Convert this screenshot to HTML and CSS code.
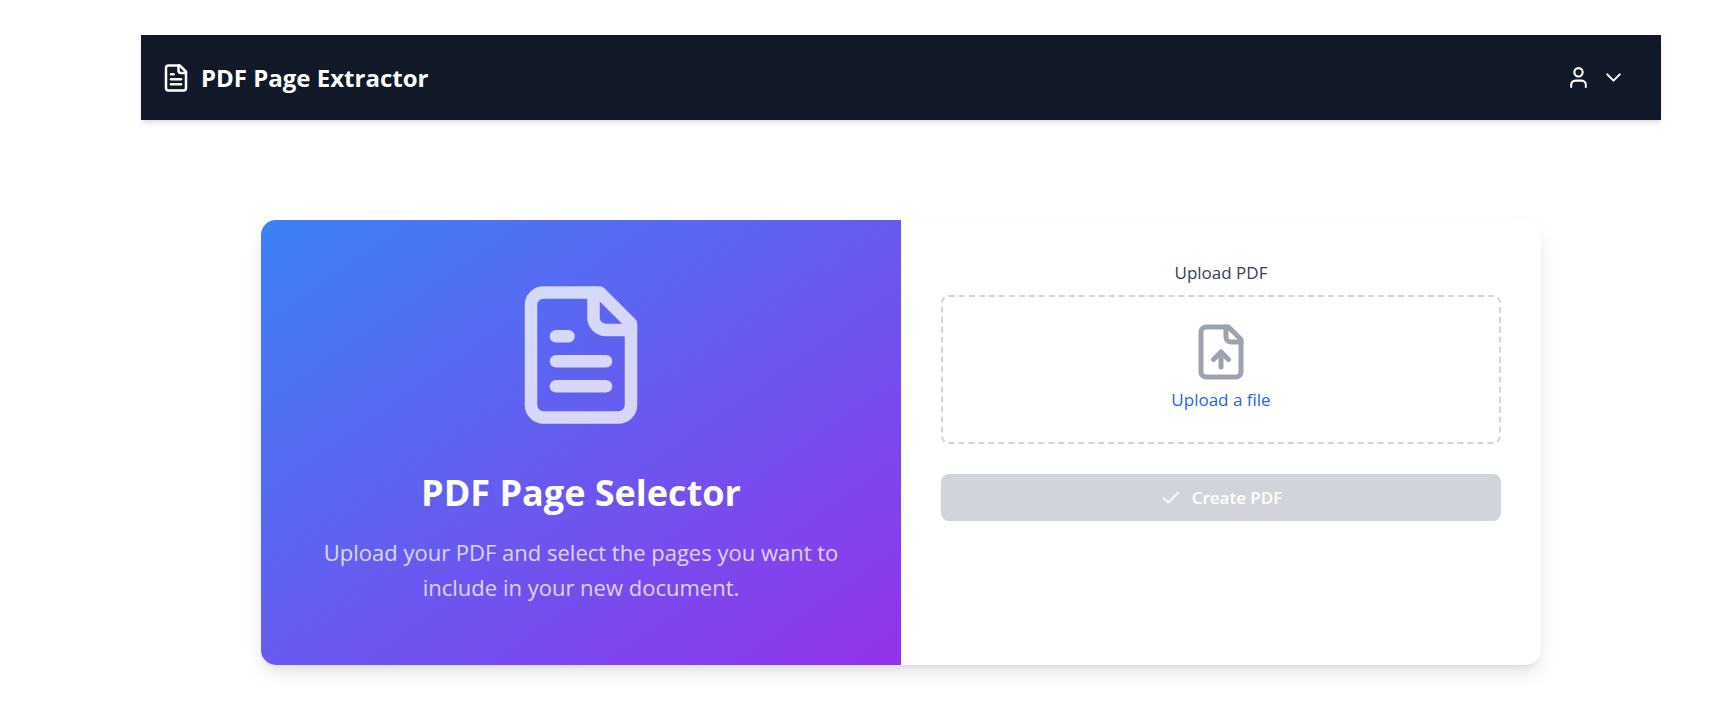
FILE: index.html
```html
<!DOCTYPE html>
<html lang="en">
<head>
<meta charset="utf-8">
<meta name="viewport" content="width=device-width, initial-scale=1">
<title>PDF Page Extractor</title>
<link rel="stylesheet" href="styles.css">
</head>
<body>
<div class="page">
  <header class="header">
    <h1 class="brand">
      <svg class="icon icon-brand" viewBox="0 0 24 24" aria-hidden="true"><path d="M15 2H6a2 2 0 0 0-2 2v16a2 2 0 0 0 2 2h12a2 2 0 0 0 2-2V7Z"/><path d="M14 2v4a2 2 0 0 0 2 2h4"/><path d="M10 9H8"/><path d="M16 13H8"/><path d="M16 17H8"/></svg>
      PDF Page Extractor
    </h1>
    <button class="account" type="button" aria-label="Account menu">
      <svg class="icon icon-small" viewBox="0 0 24 24" aria-hidden="true"><path d="M19 21v-2a4 4 0 0 0-4-4H9a4 4 0 0 0-4 4v2"/><circle cx="12" cy="7" r="4"/></svg>
      <svg class="icon icon-small" viewBox="0 0 24 24" aria-hidden="true"><path d="m6 9 6 6 6-6"/></svg>
    </button>
  </header>
  <main class="card">
    <section class="intro">
      <svg class="icon icon-hero" viewBox="0 0 24 24" aria-hidden="true"><path d="M15 2H6a2 2 0 0 0-2 2v16a2 2 0 0 0 2 2h12a2 2 0 0 0 2-2V7Z"/><path d="M14 2v4a2 2 0 0 0 2 2h4"/><path d="M10 9H8"/><path d="M16 13H8"/><path d="M16 17H8"/></svg>
      <h2 class="intro-title">PDF Page Selector</h2>
      <p class="intro-text">Upload your PDF and select the pages you want to include in your new document.</p>
    </section>
    <form class="form">
      <label class="label" for="pdf">Upload PDF</label>
      <div class="dropzone">
        <svg class="icon icon-upload" viewBox="0 0 24 24" aria-hidden="true"><path d="M15 2H6a2 2 0 0 0-2 2v16a2 2 0 0 0 2 2h12a2 2 0 0 0 2-2V7Z"/><path d="M14 2v4a2 2 0 0 0 2 2h4"/><path d="M12 12v6"/><path d="m15 15-3-3-3 3"/></svg>
        <label class="upload-link" for="pdf">Upload a file</label>
        <input class="file-input" id="pdf" type="file" accept="application/pdf">
      </div>
      <button class="submit" type="submit" disabled>
        <svg class="icon icon-check" viewBox="0 0 24 24" aria-hidden="true"><path d="M20 6 9 17l-5-5"/></svg>
        Create PDF
      </button>
    </form>
  </main>
</div>
</body>
</html>
```
FILE: styles.css
```css
* {
  box-sizing: border-box;
}

body {
  margin: 0;
  background: #fff;
  font-family: "Open Sans", "Noto Sans", sans-serif;
  font-size: 17px;
  line-height: 25px;
}

.page {
  padding: 35px 70px 35px 141px;
}

.icon {
  display: block;
  flex: none;
  fill: none;
  stroke: currentColor;
  stroke-width: 2;
  stroke-linecap: round;
  stroke-linejoin: round;
}

.header {
  display: flex;
  align-items: center;
  justify-content: space-between;
  padding: 20px;
  background: #111827;
  color: #fff;
  box-shadow: 0 4px 6px -1px rgba(0, 0, 0, 0.1), 0 2px 4px -2px rgba(0, 0, 0, 0.1);
}

.brand {
  display: flex;
  align-items: center;
  gap: 10px;
  margin: 0;
  font-size: 24px;
  font-weight: 700;
  line-height: 45px;
}

.icon-brand {
  width: 30px;
  height: 30px;
}

.account {
  display: flex;
  align-items: center;
  gap: 10px;
  padding: 0 15px;
  border: 0;
  background: none;
  color: inherit;
}

.icon-small {
  width: 25px;
  height: 25px;
}

.card {
  display: grid;
  grid-template-columns: 1fr 1fr;
  max-width: 1280px;
  margin: 100px auto 0;
  border-radius: 15px;
  overflow: hidden;
  background: #fff;
  box-shadow: 0 10px 20px -3px rgba(0, 0, 0, 0.12), 0 4px 6px -4px rgba(0, 0, 0, 0.1);
}

.intro {
  display: flex;
  flex-direction: column;
  align-items: center;
  padding: 60px;
  background: linear-gradient(to bottom right, #3b82f6, #9333ea);
  color: #fff;
  text-align: center;
}

.icon-hero {
  width: 150px;
  height: 150px;
  opacity: 0.75;
}

.intro-title {
  margin: 40px 0 20px;
  font-size: 36px;
  font-weight: 700;
  line-height: 45px;
}

.intro-text {
  margin: 0;
  font-size: 22px;
  line-height: 35px;
  opacity: 0.75;
}

.form {
  display: flex;
  flex-direction: column;
  padding: 40px;
}

.label {
  margin-bottom: 10px;
  color: #374151;
  font-weight: 500;
  text-align: center;
}

.dropzone {
  display: flex;
  flex-direction: column;
  align-items: center;
  padding: 25px 25px 30px;
  border: 2px dashed #d1d5db;
  border-radius: 8px;
}

.icon-upload {
  width: 60px;
  height: 60px;
  margin-bottom: 5px;
  color: #9ca3af;
}

.upload-link {
  color: #2563eb;
  font-weight: 500;
  cursor: pointer;
}

.file-input {
  position: absolute;
  width: 1px;
  height: 1px;
  opacity: 0;
}

.submit {
  display: flex;
  align-items: center;
  justify-content: center;
  gap: 10px;
  margin-top: 30px;
  padding: 11px;
  border: 0;
  border-radius: 8px;
  background: #d1d5db;
  color: #fff;
  font: inherit;
  font-weight: 600;
}

.icon-check {
  width: 22px;
  height: 22px;
}
```
